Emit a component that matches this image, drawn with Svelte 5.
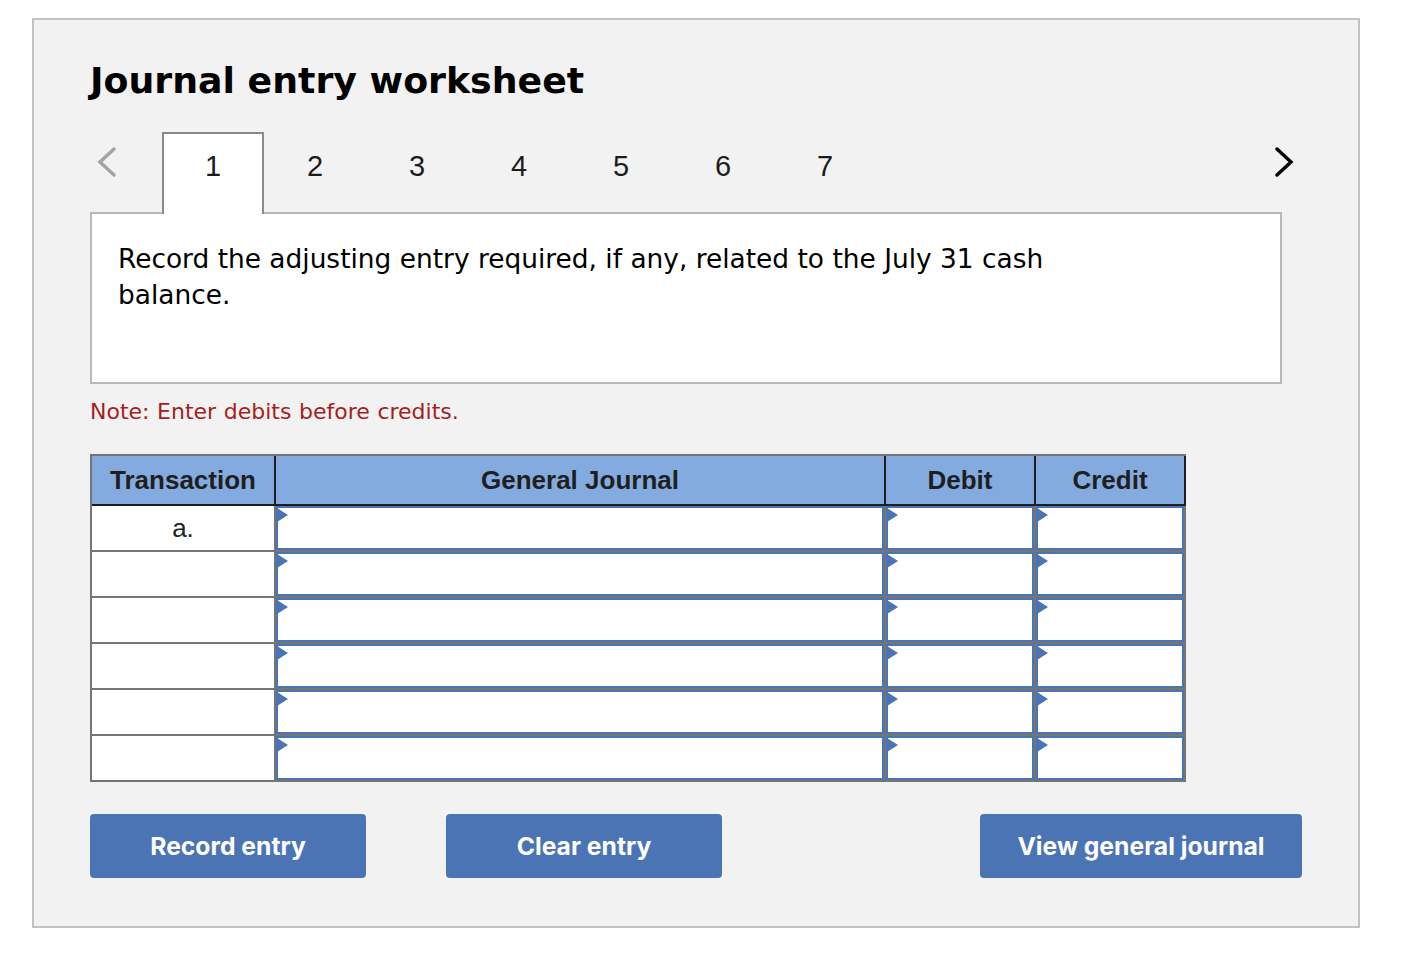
<script>
  const tabs = [1, 2, 3, 4, 5, 6, 7];
  const active = 1;
  const rows = ['a.', '', '', '', '', ''];
</script>

<main class="panel">
  <h1>Journal entry worksheet</h1>

  <nav class="tabs">
    <button class="arrow prev" aria-label="Previous">
      <svg width="20" height="30" viewBox="0 0 20 30"><path d="M17 2 L3 15 L17 28" /></svg>
    </button>
    {#each tabs as t}
      <button class="tab" class:active={t === active}>{t}</button>
    {/each}
    <button class="arrow next" aria-label="Next">
      <svg width="20" height="30" viewBox="0 0 20 30"><path d="M3 2 L17 15 L3 28" /></svg>
    </button>
  </nav>

  <div class="prompt">
    <p>Record the adjusting entry required, if any, related to the July 31 cash balance.</p>
  </div>

  <p class="note">Note: Enter debits before credits.</p>

  <table>
    <thead>
      <tr>
        <th class="c1">Transaction</th>
        <th class="c2">General Journal</th>
        <th class="c3">Debit</th>
        <th class="c4">Credit</th>
      </tr>
    </thead>
    <tbody>
      {#each rows as r}
        <tr>
          <td class="txn">{r}</td>
          <td><div class="field"></div></td>
          <td><div class="field"></div></td>
          <td><div class="field"></div></td>
        </tr>
      {/each}
    </tbody>
  </table>

  <div class="actions">
    <button class="btn">Record entry</button>
    <button class="btn">Clear entry</button>
    <button class="btn wide">View general journal</button>
  </div>
</main>

<style>
  :global(body) {
    background: #fff;
  }
  .panel {
    box-sizing: border-box;
    width: 1328px;
    height: 910px;
    margin: 18px 0 0 32px;
    padding: 0 56px;
    background: #f2f2f2;
    border: 2px solid #c2c2c2;
    font-family: "DejaVu Sans", sans-serif;
    color: #000;
  }
  h1 {
    margin: 0;
    padding-top: 39px;
    height: 73px;
    font-size: 36.3px;
    line-height: 44px;
    font-weight: 700;
  }
  .tabs {
    display: flex;
    position: relative;
    height: 82px;
    margin-bottom: -2px;
  }
  button {
    border: none;
    background: none;
    padding: 0;
    font: inherit;
  }
  .tab {
    box-sizing: border-box;
    width: 102px;
    height: 82px;
    padding-bottom: 16px;
    font-family: "Liberation Sans", sans-serif;
    font-size: 29px;
    color: #1c1c1c;
    border: 2px solid transparent;
    border-bottom: none;
  }
  .tab.active {
    background: #fff;
    border-color: #8a8a8a;
    position: relative;
    z-index: 1;
  }
  .arrow {
    height: 30px;
    margin-top: 15px;
    display: flex;
  }
  .prev {
    width: 72px;
    padding-left: 7px;
  }
  .next {
    margin-left: auto;
    margin-right: 8px;
  }
  .arrow path {
    fill: none;
    stroke-width: 3.4;
    stroke-linecap: round;
    stroke-linejoin: miter;
  }
  .prev path {
    stroke: #a3a3a3;
  }
  .next path {
    stroke: #000;
  }
  .prompt {
    box-sizing: border-box;
    width: 1192px;
    height: 172px;
    padding: 27px 26px;
    background: #fff;
    border: 2px solid #b8b8b8;
  }
  .prompt p {
    margin: 0;
    max-width: 960px;
    font-size: 26.42px;
    line-height: 36px;
  }
  .note {
    margin: 14px 0 0;
    height: 56px;
    font-size: 22px;
    word-spacing: 0.6px;
    line-height: 28px;
    color: #a61d1d;
  }
  table {
    border-collapse: separate;
    border-spacing: 0;
    table-layout: fixed;
    width: 1096px;
    font-family: "Liberation Sans", sans-serif;
    border-top: 2px solid #757575;
    border-left: 2px solid #757575;
  }
  th {
    height: 48px;
    padding: 0;
    background: #84abe0;
    color: #1f1f1f;
    font-size: 26px;
    font-weight: 700;
    border-bottom: 2px solid #1f1f1f;
    border-right: 2px solid #1f1f1f;
  }
  .c1 { width: 182px; }
  .c2 { width: 608px; }
  .c3 { width: 148px; }
  .c4 { width: 148px; }
  td {
    height: 44px;
    padding: 0;
    background: #fff;
    border-bottom: 2px solid #757575;
    border-right: 2px solid #757575;
  }
  .txn {
    text-align: center;
    font-size: 26px;
    color: #222;
  }
  .field {
    box-sizing: border-box;
    position: relative;
    height: 44px;
    border: 2px solid #4a74b4;
    background: #fff;
  }
  .field::before {
    content: "";
    position: absolute;
    left: -1px;
    top: 0;
    border-left: 11px solid #4a74b4;
    border-top: 7px solid transparent;
    border-bottom: 7px solid transparent;
  }
  .actions {
    display: flex;
    gap: 80px;
    margin-top: 32px;
  }
  .btn {
    width: 276px;
    height: 64px;
    border-radius: 4px;
    background: #4a74b4;
    color: #fff;
    font-family: Inter, sans-serif;
    font-size: 24.7px;
    font-weight: 700;
  }
  .wide {
    width: 322px;
    margin-left: auto;
  }
</style>
